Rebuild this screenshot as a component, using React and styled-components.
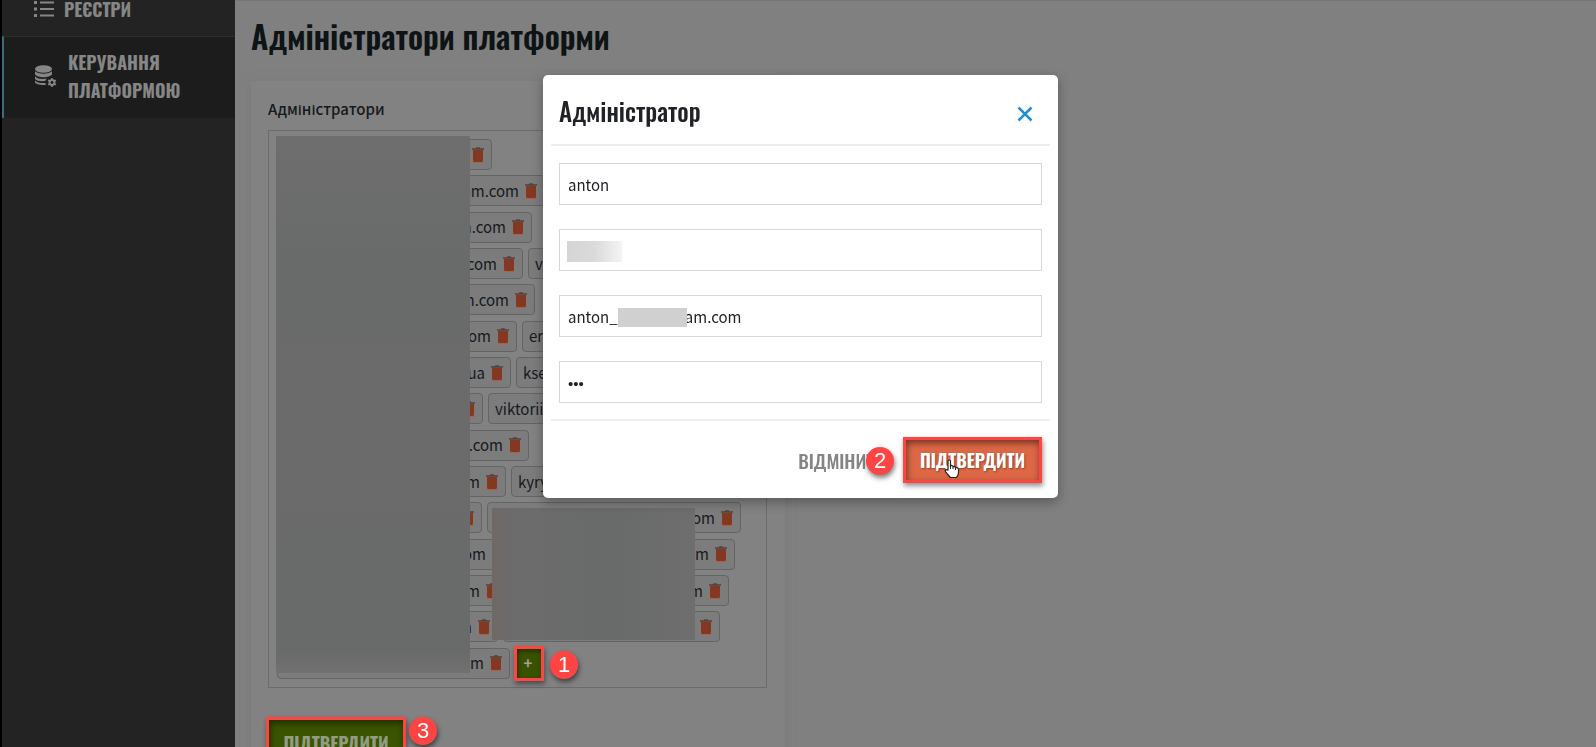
import React from 'react';
import styled, { createGlobalStyle, css } from 'styled-components';

const heading = css`
  font-family: 'Oswald', 'Liberation Sans Narrow', 'Roboto Condensed', 'Liberation Sans', sans-serif;
`;
const red = '#ff4444';

const GlobalStyle = createGlobalStyle`
  * { box-sizing: border-box; }
  body {
    margin: 0;
    overflow: hidden;
    background: #808080;
    color: #16191c;
    font-family: 'Noto Sans CJK SC', 'Noto Sans', sans-serif;
    font-size: 15px;
    line-height: 20px;
  }
  button, input { font: inherit; margin: 0; }
`;

const Page = styled.div`
  display: flex;
  height: 100vh;
  overflow: hidden;
  border-left: 2px solid #000;
`;

const Sidebar = styled.nav`
  flex: 0 0 233px;
  background: #232323;
`;

const NavLink = styled.a`
  ${heading}
  display: flex;
  align-items: center;
  gap: ${(p) => (p.$active ? 11 : 10)}px;
  min-height: ${(p) => (p.$active ? 82 : 36)}px;
  padding: ${(p) => (p.$active ? '0 40px 4px 31px' : '0 40px 18px 30px')};
  border-left: 2px solid ${(p) => (p.$active ? '#35707a' : 'transparent')};
  border-top: ${(p) => (p.$active ? '1px solid #2e2e2e' : '0')};
  background: ${(p) => (p.$active ? '#1c1c1c' : 'transparent')};
  color: #868686;
  font-size: 18px;
  font-weight: 700;
  line-height: ${(p) => (p.$active ? 28 : 18)}px;
  text-decoration: none;
  svg { flex: none; }
`;

const Main = styled.main`
  flex: 1;
  min-width: 0;
  padding: 12px 16px 0;
  border-top: 1px solid #74767e;
`;

const Title = styled.h1`
  ${heading}
  margin: 0 0 22px;
  color: #0e1316;
  font-size: 32px;
  font-weight: 600;
  line-height: 46px;
  white-space: nowrap;
`;

const Card = styled.form`
  width: 534px;
  padding: 18px 18px 0 17px;
  background: #828282;
  box-shadow: 0 0 8px #74747480;
`;

const Legend = styled.h2`
  margin: 0 0 11px;
  font-size: 15px;
  font-weight: 500;
  line-height: 20px;
`;

const ChipBox = styled.div`
  position: relative;
  display: flex;
  flex-direction: column;
  justify-content: space-between;
  min-height: 558px;
  padding: 8px;
  border: 1px solid #6b6b6b;
`;

const ChipRow = styled.div`
  display: flex;
  gap: 5px;
`;

const Chip = styled.span`
  display: flex;
  align-items: center;
  justify-content: ${(p) => (p.$start ? 'flex-start' : 'flex-end')};
  gap: 6px;
  flex: 0 0 ${(p) => p.$w}px;
  height: 31px;
  padding: 0 7px 0 6px;
  border: 1px solid #646464;
  border-radius: 4px;
  background: #7c7c7c;
  overflow: hidden;
  white-space: nowrap;
`;

const IconButton = styled.button`
  display: flex;
  padding: 0;
  border: 0;
  background: none;
`;

const Mask = styled.span`
  position: absolute;
  left: ${(p) => p.$x}px;
  top: ${(p) => p.$y}px;
  width: ${(p) => p.$w}px;
  height: ${(p) => p.$h}px;
  background: ${(p) => p.$fill};
`;

const Frame = styled.span`
  position: relative;
  display: inline-flex;
  border: 3px solid ${red};
  box-shadow: 1px 3px 5px #00000070;
`;

const Badge = styled.span`
  position: absolute;
  z-index: 2;
  ${(p) => (p.$side === 'left' ? 'right' : 'left')}: calc(100% + ${(p) => p.$gap}px);
  top: ${(p) => p.$top}px;
  display: grid;
  place-items: center;
  width: 28px;
  height: 28px;
  border-radius: 50%;
  background: ${red};
  box-shadow: 1px 3px 5px #00000080;
  color: #fff;
  font-family: 'Liberation Sans', sans-serif;
  font-size: 22px;
  line-height: 28px;
`;

const AddButton = styled.button`
  width: 24px;
  height: 29px;
  padding: 0 2px 0 0;
  border: 0;
  background: #3a5200;
  box-shadow: inset 1px 2px 5px #00000070;
  color: #a0a0a0;
  font-weight: 700;
`;

const AddFrame = styled(Frame)`
  margin: -2px 0 -2px -1px;
`;

const Submit = styled.button`
  ${heading}
  height: ${(p) => (p.$muted ? 46 : 40)}px;
  min-width: ${(p) => (p.$muted ? 134 : 133)}px;
  padding: 0;
  border: 0;
  background: ${(p) => (p.$muted ? '#3b5400' : '#de6846')};
  box-shadow: inset 1px 3px 7px #00000080;
  color: ${(p) => (p.$muted ? '#929c84' : '#fff')};
  font-size: 18px;
  font-weight: 700;
  text-shadow: ${(p) => (p.$muted ? 'none' : '1px 1px 2px #00000060')};
`;

const CardFooter = styled.div`
  padding: 29px 0 0;
  margin-left: -2px;
`;

const Layer = styled.div`
  position: fixed;
  inset: 0;
  display: flex;
  align-items: flex-start;
  justify-content: center;
  padding: 75px 0 0 5px;
`;

const Dialog = styled.section`
  width: 515px;
  padding: 0 8px;
  border-radius: 5px;
  background: #fff;
  box-shadow: 0 4px 12px #00000050;
`;

const DialogHeader = styled.header`
  display: flex;
  align-items: center;
  justify-content: space-between;
  height: 71px;
  padding: 4px 17px 0 8px;
  border-bottom: 2px solid #efeff0;
`;

const DialogTitle = styled.h2`
  ${heading}
  margin: 0;
  padding-bottom: 2px;
  color: #202226;
  font-size: 25px;
  font-weight: 500;
  line-height: 36px;
`;

const CloseButton = styled(IconButton)`
  padding-top: 4px;
`;

const Fields = styled.div`
  display: flex;
  flex-direction: column;
  gap: 24px;
  padding: 17px 8px 16px;
`;

const Field = styled.label`
  position: relative;
  display: block;
  height: 42px;
`;

const Input = styled.input`
  width: 100%;
  height: 42px;
  padding: 0 8px;
  border: 1px solid #d6d8df;
  border-radius: 0;
  outline: 0;
  background: #fff;
  color: #202226;
  &[type='password'] {
    padding-top: 2px;
    font-family: 'Liberation Sans', sans-serif;
  }
`;

const DialogFooter = styled.footer`
  display: flex;
  align-items: center;
  justify-content: flex-end;
  gap: 18px;
  height: 79px;
  padding: 0 8px 0 0;
  border-top: 2px solid #efeff0;
`;

const Cancel = styled.button`
  ${heading}
  padding: 0;
  border: 0;
  background: none;
  color: #858585;
  font-size: 19px;
  font-weight: 500;
`;

const Pointer = styled.svg`
  position: absolute;
  left: 38px;
  top: 19px;
`;

const ListIcon = () => (
  <svg width="20" height="16" viewBox="0 0 20 16" fill="#868686" aria-hidden="true">
    <path d="M0 0h3v3H0zM0 6.5h3v3H0zM0 13h3v3H0zM6 .5h14v2H6zM6 7h14v2H6zM6 13.5h14v2H6z" />
  </svg>
);

const DatabaseIcon = () => (
  <svg width="22" height="22" viewBox="0 0 22 22" fill="#868686" aria-hidden="true">
    <ellipse cx="8.5" cy="4" rx="8.5" ry="3.8" />
    <path d="M0 6.3c3 3.3 14 3.3 17 0v2.9c-2 3.9-15 3.9-17 0z" />
    <path d="M0 11.2c2.5 3 8 3.2 12 2.3-1 .8-1.5 1.6-1.7 2.5C6 16.4 1 16 0 13.700z" />
    <path d="M0 15.500c2 2.300 6 2.800 10.300 2.500l.7 1.800C6 20.400 1 19.600 0 17.500z" />
    <circle cx="17" cy="17.500" r="2.400" fill="none" stroke="#868686" strokeWidth="2" />
    <path d="M17 13v9M13.100 15.200l7.800 4.600M20.900 15.200l-7.800 4.600" stroke="#868686" strokeWidth="1.600" />
    <circle cx="17" cy="17.500" r="1.400" fill="#1c1c1c" />
  </svg>
);

const Trash = () => (
  <IconButton type="button" aria-label="Видалити">
    <svg width="12" height="16" viewBox="0 0 12 16" aria-hidden="true">
      <path d="M1 3h10v11.500q0 1-1 1H2q-1 0-1-1z" fill="#843822" />
      <path d="M1 13.800v.7q0 1 1 1h8q1 0 1-1v-.7" fill="none" stroke="#ac6048" strokeWidth="1" />
      <path d="M0 1.300h3.600L4.500.3h3l.9 1H12v1.500H0z" fill="#51423e" />
    </svg>
  </IconButton>
);

const CloseIcon = () => (
  <svg width="16" height="16" viewBox="0 0 16 16" aria-hidden="true">
    <path d="M1.500 1.500l13 13M14.500 1.500l-13 13" stroke="#1b8fd0" strokeWidth="2.600" />
  </svg>
);

const rows = [
  { w: 215, text: '' },
  { w: 268, text: 'am.com' },
  { w: 255, text: 'am.com' },
  { w: 246, text: '.com', next: 'v' },
  { w: 258, text: 'am.com' },
  { w: 240, text: 'com', next: 'er' },
  { w: 234, text: 'ua', next: 'kse' },
  { w: 206, text: '', next: 'viktorii' },
  { w: 252, text: 'm.com' },
  { w: 229, text: 'com', next: 'kyry' },
  { w: 205, text: '', masked: 254, tail: 'om' },
  { w: 235, text: 'com', masked: 218, tail: 'com' },
  { w: 229, text: 'om', masked: 218, tail: 'om' },
  { w: 221, text: 'om', masked: 217, tail: '' },
];

export default function App() {
  return (
    <>
      <GlobalStyle />
      <Page>
        <Sidebar>
          <NavLink href="#registries"><ListIcon />РЕЄСТРИ</NavLink>
          <NavLink href="#platform" $active aria-current="page"><DatabaseIcon />КЕРУВАННЯ ПЛАТФОРМОЮ</NavLink>
        </Sidebar>
        <Main>
          <Title>Адміністратори платформи</Title>
          <Card onSubmit={(e) => e.preventDefault()}>
            <Legend>Адміністратори</Legend>
            <ChipBox>
              {rows.map((r, i) => (
                <ChipRow key={i}>
                  <Chip $w={r.w}>{r.text}<Trash /></Chip>
                  {r.next && <Chip $start $w={180}>{r.next}</Chip>}
                  {r.masked && <Chip $w={r.masked}>{r.tail}<Trash /></Chip>}
                </ChipRow>
              ))}
              <ChipRow>
                <Chip $w={233}>com<Trash /></Chip>
                <AddFrame>
                  <AddButton type="button">+</AddButton>
                  <Badge $gap={9} $top={2}>1</Badge>
                </AddFrame>
              </ChipRow>
              <Mask $x={7} $y={5} $w={194} $h={537} $fill="linear-gradient(180deg, #6e6e6e, #696a6a 25%, #6b6b6b 50%, #696a6a 96%, #717171)" />
              <Mask $x={223} $y={377} $w={203} $h={132} $fill="linear-gradient(90deg, #6f6966, #6c6c6c 12%, #696a6a 60%, #6e6e6e)" />
            </ChipBox>
            <CardFooter>
              <Frame>
                <Submit $muted type="submit">ПІДТВЕРДИТИ</Submit>
                <Badge $gap={6} $top={-3}>3</Badge>
              </Frame>
            </CardFooter>
          </Card>
        </Main>
      </Page>
      <Layer>
        <Dialog role="dialog" aria-labelledby="dialog-title">
          <DialogHeader>
            <DialogTitle id="dialog-title">Адміністратор</DialogTitle>
            <CloseButton type="button" aria-label="Закрити"><CloseIcon /></CloseButton>
          </DialogHeader>
          <Fields>
            <Field><Input aria-label="Ім’я" defaultValue="anton" /></Field>
            <Field>
              <Input aria-label="Прізвище" />
              <Mask $x={8} $y={12} $w={55} $h={21} $fill="linear-gradient(90deg, #d5d5d5, #dadada 50%, #f4f4f4)" />
            </Field>
            <Field>
              <Input aria-label="Електронна пошта" defaultValue={`anton_${'\u00a0'.repeat(20)}am.com`} />
              <Mask $x={59} $y={13} $w={69} $h={19} $fill="#d0d0d0" />
            </Field>
            <Field><Input type="password" aria-label="Пароль" defaultValue="123" /></Field>
          </Fields>
          <DialogFooter>
            <Cancel type="button">ВІДМІНИТИ</Cancel>
            <Frame>
              <Submit type="button">ПІДТВЕРДИТИ</Submit>
              <Badge $side="left" $gap={12} $top={7}>2</Badge>
              <Pointer width="16" height="20" viewBox="0 0 16 20" aria-hidden="true">
                <path
                  d="M4 11V2.300Q4 1 5.200 1t1.300 1.300V7l1-.5 1.300.4.500.800 1.400-.2 1.200 1.200 1.300-.1q1.300.4 1.300 2v3q0 2.600-2 4.900H6.500Q5.200 17.200 1.600 12.800q-.9-1.700.4-2.200z"
                  fill="#fff" stroke="#222" strokeWidth="1.200"
                />
                <path d="M6.500 7v3M9 7.500V10M11.500 8.500V11" stroke="#222" strokeWidth="1" />
              </Pointer>
            </Frame>
          </DialogFooter>
        </Dialog>
      </Layer>
    </>
  );
}
